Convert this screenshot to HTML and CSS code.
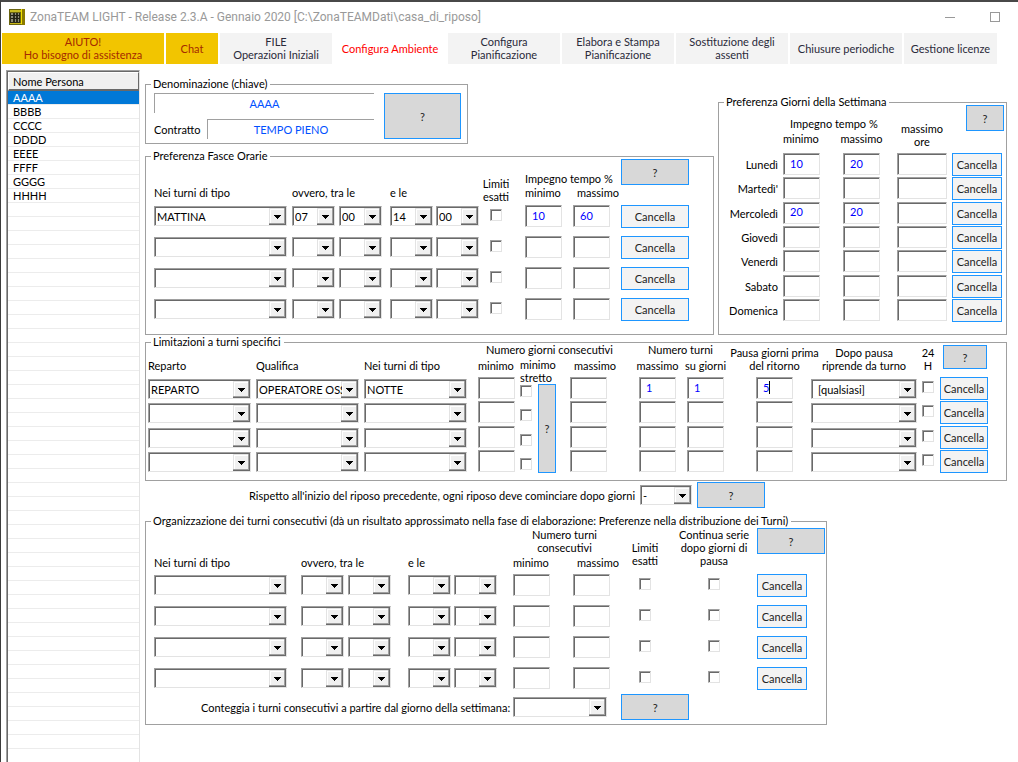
FILE: index.html
```
<!DOCTYPE html>
<html lang="it">
<head>
  <meta charset="UTF-8">
  <meta name="viewport" content="width=device-width, initial-scale=1.0">
  <title>ZonaTEAM LIGHT</title>
  <link rel="stylesheet" href="styles.css">
</head>
<body>

  <header class="titlebar">
    <svg class="app-icon" width="16" height="16" viewBox="0 0 16 16">
      <rect width="16" height="16" fill="#8a7a00"/>
      <rect x="0" y="0" width="12" height="16" fill="#6a6410"/>
      <rect x="1" y="1" width="11" height="2" fill="#c8bc20"/>
      <rect x="12" y="0" width="1" height="15" fill="#f0e000"/>
      <rect x="1" y="4" width="10" height="10" fill="#2c2c1c"/>
      <path d="M2 4h2v9h-2zM6 4h1v9h-1zM9 4h1v9h-1z" fill="#8c8c78"/>
      <path d="M2 6.5h9M2 9.5h9" stroke="#222214"/>
      <rect x="1" y="14" width="11" height="1" fill="#c8b818"/>
    </svg>
    <span class="title">ZonaTEAM LIGHT - Release 2.3.A - Gennaio 2020 [C:\ZonaTEAMDati\casa_di_riposo]</span>
    <button class="win-btn" aria-label="Riduci a icona">
      <svg width="10" height="10" viewBox="0 0 10 10"><path d="M0 5.5h10" stroke="#999"/></svg>
    </button>
    <button class="win-btn" aria-label="Ingrandisci">
      <svg width="10" height="10" viewBox="0 0 10 10"><rect x="0.5" y="0.5" width="9" height="9" fill="none" stroke="#999"/></svg>
    </button>
  </header>

  <nav class="menu">
    <button class="menu-btn help">AIUTO!<br>Ho bisogno di assistenza</button>
    <button class="menu-btn help">Chat</button>
    <button class="menu-btn">FILE<br>Operazioni Iniziali</button>
    <button class="menu-btn active">Configura Ambiente</button>
    <button class="menu-btn">Configura<br>Pianificazione</button>
    <button class="menu-btn">Elabora e Stampa<br>Pianificazione</button>
    <button class="menu-btn">Sostituzione degli<br>assenti</button>
    <button class="menu-btn">Chiusure periodiche</button>
    <button class="menu-btn">Gestione licenze</button>
  </nav>

  <main class="main">
    <div class="people">
      <table class="people-table">
        <thead><tr><th>Nome Persona</th></tr></thead>
        <tbody>
          <tr class="selected"><td>AAAA</td></tr>
          <tr><td>BBBB</td></tr>
          <tr><td>CCCC</td></tr>
          <tr><td>DDDD</td></tr>
          <tr><td>EEEE</td></tr>
          <tr><td>FFFF</td></tr>
          <tr><td>GGGG</td></tr>
          <tr><td>HHHH</td></tr>
        </tbody>
      </table>
    </div>

    <div class="workspace">
      <div class="top">
        <div class="top-left">
          <fieldset class="panel name-panel">
            <legend>Denominazione (chiave)</legend>
            <div class="body name-body">
              <div class="name-fields">
                <input class="plain" aria-label="Denominazione" value="AAAA">
                <div class="contract">
                  <label for="contratto">Contratto</label>
                  <input class="plain" id="contratto" value="TEMPO PIENO">
                </div>
              </div>
              <button class="btn info">?</button>
            </div>
          </fieldset>

          <fieldset class="panel">
            <legend>Preferenza Fasce Orarie</legend>
            <div class="body fasce fasce-heads">
              <span class="pair-head">Impegno tempo %</span>
              <button class="btn info head-btn">?</button>
              <span class="head c1">Nei turni di tipo</span>
              <span class="head c2">ovvero, tra le</span>
              <span class="head c4">e le</span>
              <span class="tall c6 over-check">Limiti<br>esatti</span>
              <span class="head c7">minimo</span>
              <span class="head c8 shift">massimo</span>
            </div>
            <div class="fasce fasce-rows">
              <select aria-label="Tipo turno 1"><option>MATTINA</option></select>
              <select aria-label="Dalle ore 1"><option>07</option></select>
              <select aria-label="Dalle minuti 1"><option>00</option></select>
              <select aria-label="Alle ore 1"><option>14</option></select>
              <select aria-label="Alle minuti 1"><option>00</option></select>
              <input type="checkbox" aria-label="Limiti esatti 1">
              <input class="num" aria-label="Minimo 1" value="10">
              <input class="num" aria-label="Massimo 1" value="60">
              <button class="btn">Cancella</button>

              <select aria-label="Tipo turno 2"><option></option></select>
              <select aria-label="Dalle ore 2"><option></option></select>
              <select aria-label="Dalle minuti 2"><option></option></select>
              <select aria-label="Alle ore 2"><option></option></select>
              <select aria-label="Alle minuti 2"><option></option></select>
              <input type="checkbox" aria-label="Limiti esatti 2">
              <input class="num" aria-label="Minimo 2">
              <input class="num" aria-label="Massimo 2">
              <button class="btn">Cancella</button>

              <select aria-label="Tipo turno 3"><option></option></select>
              <select aria-label="Dalle ore 3"><option></option></select>
              <select aria-label="Dalle minuti 3"><option></option></select>
              <select aria-label="Alle ore 3"><option></option></select>
              <select aria-label="Alle minuti 3"><option></option></select>
              <input type="checkbox" aria-label="Limiti esatti 3">
              <input class="num" aria-label="Minimo 3">
              <input class="num" aria-label="Massimo 3">
              <button class="btn">Cancella</button>

              <select aria-label="Tipo turno 4"><option></option></select>
              <select aria-label="Dalle ore 4"><option></option></select>
              <select aria-label="Dalle minuti 4"><option></option></select>
              <select aria-label="Alle ore 4"><option></option></select>
              <select aria-label="Alle minuti 4"><option></option></select>
              <input type="checkbox" aria-label="Limiti esatti 4">
              <input class="num" aria-label="Minimo 4">
              <input class="num" aria-label="Massimo 4">
              <button class="btn">Cancella</button>
            </div>
          </fieldset>
        </div>

        <fieldset class="panel">
          <legend>Preferenza Giorni della Settimana</legend>
          <div class="body giorni giorni-heads">
            <span class="pair-head">Impegno tempo %</span>
            <span class="tall c4 hours">massimo<br>ore</span>
            <button class="btn info head-btn">?</button>
            <span class="head c2">minimo</span>
            <span class="head c3 over-num">massimo</span>
          </div>
          <div class="giorni giorni-rows">
            <span class="day">Lunedì</span>
            <input class="num" aria-label="Lunedì minimo" value="10">
            <input class="num" aria-label="Lunedì massimo" value="20">
            <input class="num wide" aria-label="Lunedì massimo ore">
            <button class="btn">Cancella</button>

            <span class="day">Martedì'</span>
            <input class="num" aria-label="Martedì minimo">
            <input class="num" aria-label="Martedì massimo">
            <input class="num wide" aria-label="Martedì massimo ore">
            <button class="btn">Cancella</button>

            <span class="day">Mercoledì</span>
            <input class="num" aria-label="Mercoledì minimo" value="20">
            <input class="num" aria-label="Mercoledì massimo" value="20">
            <input class="num wide" aria-label="Mercoledì massimo ore">
            <button class="btn">Cancella</button>

            <span class="day">Giovedì</span>
            <input class="num" aria-label="Giovedì minimo">
            <input class="num" aria-label="Giovedì massimo">
            <input class="num wide" aria-label="Giovedì massimo ore">
            <button class="btn">Cancella</button>

            <span class="day">Venerdì</span>
            <input class="num" aria-label="Venerdì minimo">
            <input class="num" aria-label="Venerdì massimo">
            <input class="num wide" aria-label="Venerdì massimo ore">
            <button class="btn">Cancella</button>

            <span class="day">Sabato</span>
            <input class="num" aria-label="Sabato minimo">
            <input class="num" aria-label="Sabato massimo">
            <input class="num wide" aria-label="Sabato massimo ore">
            <button class="btn">Cancella</button>

            <span class="day">Domenica</span>
            <input class="num" aria-label="Domenica minimo">
            <input class="num" aria-label="Domenica massimo">
            <input class="num wide" aria-label="Domenica massimo ore">
            <button class="btn">Cancella</button>
          </div>
        </fieldset>
      </div>

      <fieldset class="panel">
        <legend>Limitazioni a turni specifici</legend>
        <div class="body limiti limiti-heads">
          <span class="group days-head">Numero giorni consecutivi</span>
          <span class="group turns-head">Numero turni</span>
          <span class="head c1">Reparto</span>
          <span class="head c2">Qualifica</span>
          <span class="head c3">Nei turni di tipo</span>
          <span class="head c4">minimo</span>
          <span class="head c5">minimo<br>stretto</span>
          <span class="head c7 shift">massimo</span>
          <span class="head c8 over-num">massimo</span>
          <span class="head c9 over-num">su giorni</span>
          <span class="tall c10 over-num">Pausa giorni prima<br>del ritorno</span>
          <span class="tall c11 over-select">Dopo pausa<br>riprende da turno</span>
          <span class="tall c12 over-check">24<br>H</span>
          <button class="btn info head-btn">?</button>
        </div>
        <div class="limiti limiti-rows">
          <button class="btn info tall-btn">?</button>

          <select aria-label="Reparto 1"><option>REPARTO</option></select>
          <select aria-label="Qualifica 1"><option>OPERATORE OSS</option></select>
          <select class="type" aria-label="Tipo turno specifico 1"><option>NOTTE</option></select>
          <input class="num" aria-label="Giorni minimo 1">
          <input type="checkbox" class="low" aria-label="Minimo stretto 1">
          <input class="num" aria-label="Giorni massimo 1">
          <input class="num" aria-label="Turni massimo 1" value="1">
          <input class="num" aria-label="Su giorni 1" value="1">
          <span class="caret"><input class="num" aria-label="Pausa giorni 1" value="5"></span>
          <select class="inset" aria-label="Riprende da turno 1"><option>[qualsiasi]</option></select>
          <input type="checkbox" aria-label="24 H 1">
          <button class="btn">Cancella</button>

          <select aria-label="Reparto 2"><option></option></select>
          <select aria-label="Qualifica 2"><option></option></select>
          <select class="type" aria-label="Tipo turno specifico 2"><option></option></select>
          <input class="num" aria-label="Giorni minimo 2">
          <input type="checkbox" class="low" aria-label="Minimo stretto 2">
          <input class="num" aria-label="Giorni massimo 2">
          <input class="num" aria-label="Turni massimo 2">
          <input class="num" aria-label="Su giorni 2">
          <input class="num" aria-label="Pausa giorni 2">
          <select aria-label="Riprende da turno 2"><option></option></select>
          <input type="checkbox" aria-label="24 H 2">
          <button class="btn">Cancella</button>

          <select aria-label="Reparto 3"><option></option></select>
          <select aria-label="Qualifica 3"><option></option></select>
          <select class="type" aria-label="Tipo turno specifico 3"><option></option></select>
          <input class="num" aria-label="Giorni minimo 3">
          <input type="checkbox" class="low" aria-label="Minimo stretto 3">
          <input class="num" aria-label="Giorni massimo 3">
          <input class="num" aria-label="Turni massimo 3">
          <input class="num" aria-label="Su giorni 3">
          <input class="num" aria-label="Pausa giorni 3">
          <select aria-label="Riprende da turno 3"><option></option></select>
          <input type="checkbox" aria-label="24 H 3">
          <button class="btn">Cancella</button>

          <select aria-label="Reparto 4"><option></option></select>
          <select aria-label="Qualifica 4"><option></option></select>
          <select class="type" aria-label="Tipo turno specifico 4"><option></option></select>
          <input class="num" aria-label="Giorni minimo 4">
          <input type="checkbox" class="low" aria-label="Minimo stretto 4">
          <input class="num" aria-label="Giorni massimo 4">
          <input class="num" aria-label="Turni massimo 4">
          <input class="num" aria-label="Su giorni 4">
          <input class="num" aria-label="Pausa giorni 4">
          <select aria-label="Riprende da turno 4"><option></option></select>
          <input type="checkbox" aria-label="24 H 4">
          <button class="btn">Cancella</button>
        </div>
      </fieldset>

      <div class="rest-row">
        <label for="riposo">Rispetto all'inizio del riposo precedente, ogni riposo deve cominciare dopo giorni</label>
        <select id="riposo" class="rest-select"><option>-</option></select>
        <button class="btn info">?</button>
      </div>

      <fieldset class="panel turni-panel">
        <legend>Organizzazione dei turni consecutivi (dà un risultato approssimato nella fase di elaborazione: Preferenze nella distribuzione dei Turni)</legend>
        <div class="body turni turni-heads">
          <span class="pair-head">Numero turni<br>consecutivi</span>
          <button class="btn info head-btn">?</button>
          <span class="head c1">Nei turni di tipo</span>
          <span class="head c2">ovvero, tra le</span>
          <span class="head c4">e le</span>
          <span class="head c6">minimo</span>
          <span class="head c7 shift">massimo</span>
          <span class="tall c8 over-check">Limiti<br>esatti</span>
          <span class="tall c9 over-check">Continua serie<br>dopo giorni di<br>pausa</span>
        </div>
        <div class="turni turni-rows">
          <select aria-label="Tipo turno consecutivo 1"><option></option></select>
          <select aria-label="Consecutivi dalle ore 1"><option></option></select>
          <select aria-label="Consecutivi dalle minuti 1"><option></option></select>
          <select aria-label="Consecutivi alle ore 1"><option></option></select>
          <select aria-label="Consecutivi alle minuti 1"><option></option></select>
          <input class="num" aria-label="Consecutivi minimo 1">
          <input class="num" aria-label="Consecutivi massimo 1">
          <input type="checkbox" aria-label="Consecutivi limiti esatti 1">
          <input type="checkbox" aria-label="Continua serie 1">
          <button class="btn">Cancella</button>

          <select aria-label="Tipo turno consecutivo 2"><option></option></select>
          <select aria-label="Consecutivi dalle ore 2"><option></option></select>
          <select aria-label="Consecutivi dalle minuti 2"><option></option></select>
          <select aria-label="Consecutivi alle ore 2"><option></option></select>
          <select aria-label="Consecutivi alle minuti 2"><option></option></select>
          <input class="num" aria-label="Consecutivi minimo 2">
          <input class="num" aria-label="Consecutivi massimo 2">
          <input type="checkbox" aria-label="Consecutivi limiti esatti 2">
          <input type="checkbox" aria-label="Continua serie 2">
          <button class="btn">Cancella</button>

          <select aria-label="Tipo turno consecutivo 3"><option></option></select>
          <select aria-label="Consecutivi dalle ore 3"><option></option></select>
          <select aria-label="Consecutivi dalle minuti 3"><option></option></select>
          <select aria-label="Consecutivi alle ore 3"><option></option></select>
          <select aria-label="Consecutivi alle minuti 3"><option></option></select>
          <input class="num" aria-label="Consecutivi minimo 3">
          <input class="num" aria-label="Consecutivi massimo 3">
          <input type="checkbox" aria-label="Consecutivi limiti esatti 3">
          <input type="checkbox" aria-label="Continua serie 3">
          <button class="btn">Cancella</button>

          <select aria-label="Tipo turno consecutivo 4"><option></option></select>
          <select aria-label="Consecutivi dalle ore 4"><option></option></select>
          <select aria-label="Consecutivi dalle minuti 4"><option></option></select>
          <select aria-label="Consecutivi alle ore 4"><option></option></select>
          <select aria-label="Consecutivi alle minuti 4"><option></option></select>
          <input class="num" aria-label="Consecutivi minimo 4">
          <input class="num" aria-label="Consecutivi massimo 4">
          <input type="checkbox" aria-label="Consecutivi limiti esatti 4">
          <input type="checkbox" aria-label="Continua serie 4">
          <button class="btn">Cancella</button>
        </div>
        <div class="count-row">
          <label for="giorno">Conteggia i turni consecutivi a partire dal giorno della settimana:</label>
          <select id="giorno" class="count-select"><option></option></select>
          <button class="btn info">?</button>
        </div>
      </fieldset>
    </div>
  </main>

</body>
</html>
```
FILE: styles.css
```
* {
  box-sizing: border-box;
}

body {
  margin: 0;
  min-height: 100vh;
  display: flex;
  flex-direction: column;
  border-top: 2px solid #484848;
  border-left: 1px solid #3c3c3c;
  background: #fff;
  color: #000;
  font: 11px/13px Lato, "Open Sans", sans-serif;
}

button, input, select {
  font: inherit;
  margin: 0;
}

/* title bar */
.titlebar {
  display: flex;
  align-items: center;
  height: 31px;
  padding: 0 18px 2px 8px;
}

.app-icon {
  margin-right: 5px;
}

.title {
  flex: 1;
  color: #999;
  font: 12px/16px Roboto, sans-serif;
}

.win-btn {
  display: flex;
  padding: 0;
  margin-left: 35px;
  border: 0;
  background: none;
}

/* menu */
.menu {
  display: grid;
  grid-template-columns: 162fr 52fr repeat(6, 112fr) 93fr;
  gap: 2px;
  height: 31px;
  padding: 0 21px 0 1px;
}

.menu-btn {
  padding: 0 0 1px;
  border: 0;
  background: #f3f3f3;
  color: #2a2a3a;
  white-space: nowrap;
}

.menu-btn.help {
  background: #f2c500;
  color: #a52a00;
}

.menu-btn.active {
  background: #fff;
  color: #f00;
}

/* people list */
.main {
  flex: 1;
  display: grid;
  grid-template-columns: 134px 1fr;
  column-gap: 5px;
  padding: 6px 11px 0 5px;
}

.people {
  border: 1px solid #a0a0a0;
  border-right-color: #e3e3e3;
  border-bottom: 0;
  box-shadow: inset 1px 1px 0 #696969;
  padding: 1px 0 0 1px;
  background: repeating-linear-gradient(#fff 0 13px, #ececec 13px 14px) 1px 20px no-repeat;
}

.people-table {
  width: 100%;
  border-collapse: separate;
  border-spacing: 0;
}

.people-table th {
  height: 19px;
  padding: 0 4px;
  border: 1px solid #fff;
  border-right-color: #696969;
  border-bottom: 2px solid #696969;
  background: #f0f0f0;
  font-weight: normal;
  text-align: left;
}

.people-table td {
  height: 14px;
  padding: 0 5px;
  border-bottom: 1px solid #ececec;
}

.people-table .selected td {
  background: #0078d7;
  color: #fff;
}

/* panels */
.workspace {
  display: flex;
  flex-direction: column;
  min-width: 0;
}

.top {
  display: grid;
  grid-template-columns: 1fr 289px;
  align-items: end;
  column-gap: 4px;
}

.top-left {
  display: flex;
  flex-direction: column;
  padding-top: 7px;
  gap: 5px;
}

.panel {
  min-width: 0;
  margin: 0;
  padding: 0;
  border: 1px solid #a0a0a0;
}

.panel legend {
  height: 14px;
  margin-left: 5px;
  padding: 0 3px 0 2px;
  line-height: 14px;
  white-space: nowrap;
}

/* pull the content up next to the top border */
.body {
  margin-top: -6px;
}

.name-panel {
  align-self: flex-start;
  width: 323px;
}

.name-body {
  display: grid;
  grid-template-columns: 1fr 77px;
  gap: 10px;
  padding: 8px 6px 4px 8px;
}

.name-fields {
  display: flex;
  flex-direction: column;
  gap: 6px;
}

.contract {
  display: flex;
  align-items: center;
  gap: 6px;
}

.contract label {
  width: 47px;
}

.plain {
  flex: 1;
  min-width: 0;
  height: 20px;
  padding: 0;
  border: solid #a0a0a0;
  border-width: 1px 0 0 1px;
  background: #fff;
  color: #0050ff;
  text-align: center;
}

.name-fields > .plain {
  flex: none;
}

/* controls */
.btn {
  width: 100%;
  height: 23px;
  padding: 0;
  border: 1px solid #1e96ff;
  background: #f3f3f3;
  color: #222;
}

.info {
  height: 26px;
  background: #d8d8d8;
}

.name-body .info {
  height: 46px;
}

select {
  appearance: none;
  height: 20px;
  padding: 0 16px 0 2px;
  border: 1px solid #e3e3e3;
  border-top-color: #a0a0a0;
  border-left-color: #a0a0a0;
  border-radius: 0;
  box-shadow: inset 1px 1px 0 #696969;
  color: #000;
  background: #fff url("data:image/svg+xml,%3Csvg xmlns='http://www.w3.org/2000/svg' width='17' height='17' shape-rendering='crispEdges'%3E%3Crect width='17' height='17' fill='%23696969'/%3E%3Crect width='16' height='16' fill='%23a0a0a0'/%3E%3Crect width='15' height='15' fill='%23e3e3e3'/%3E%3Crect x='1' y='1' width='14' height='14' fill='%23fff'/%3E%3Crect x='2' y='2' width='13' height='13' fill='%23f0f0f0'/%3E%3Cpath d='M5 7h7v1h-1v1h-1v1h-1v1h-1v-1h-1v-1h-1v-1h-1z'/%3E%3C/svg%3E") no-repeat right 0 top 1px;
}

.num {
  width: 37px;
  height: 22px;
  padding: 0 2px 2px 6px;
  border: 1px solid #e3e3e3;
  border-top-color: #a0a0a0;
  border-left-color: #a0a0a0;
  box-shadow: inset 1px 1px 0 #696969;
  background: #fff;
  color: #00f;
}

.num.wide {
  width: 50px;
}

input[type="checkbox"] {
  appearance: none;
  width: 12px;
  height: 12px;
  margin-top: 4px;
  border: 1px solid #e3e3e3;
  border-top-color: #a0a0a0;
  border-left-color: #a0a0a0;
  box-shadow: inset 1px 1px 0 #696969;
  background: #fff;
}

input[type="checkbox"].low {
  margin-top: 8px;
}

.inset {
  padding-left: 6px;
}

/* column headings */
.head, .tall, .pair-head, .group {
  white-space: nowrap;
}

.head {
  grid-row: 2;
}

.tall {
  grid-row: 1 / 3;
  align-self: end;
  text-align: center;
}

.pair-head {
  grid-row: 1;
  align-self: end;
}

.head-btn {
  grid-row: 1;
  margin-top: 2px;
}

.over-check, .over-num, .over-select, .hours {
  display: flex;
  justify-content: center;
}

.over-check {
  width: 12px;
}

.over-num {
  width: 37px;
}

.over-select {
  width: 106px;
}

.hours {
  width: 50px;
}

.shift {
  padding-left: 4px;
}

.c1 { grid-column: 1; }
.c2 { grid-column: 2; }
.c3 { grid-column: 3; }
.c4 { grid-column: 4; }
.c5 { grid-column: 5; }
.c6 { grid-column: 6; }
.c7 { grid-column: 7; }
.c8 { grid-column: 8; }
.c9 { grid-column: 9; }
.c10 { grid-column: 10; }
.c11 { grid-column: 11; }
.c12 { grid-column: 12; }

/* Preferenza Fasce Orarie */
.fasce {
  display: grid;
  grid-template-columns: minmax(138px, 1fr) 47px 51px 46px 54px 35px 48px 48px 68px;
  align-items: start;
  padding: 0 24px 0 8px;
}

.fasce-heads {
  grid-template-rows: 29px 19px;
}

.fasce-rows {
  grid-auto-rows: 31px;
  padding-bottom: 5px;
}

.fasce .pair-head {
  grid-column: 7 / 9;
  padding-bottom: 1px;
}

.fasce .head-btn {
  grid-column: 9;
}

.fasce .tall {
  padding-bottom: 2px;
}

.fasce select, .turni select {
  width: 43px;
  margin-top: 1px;
}

.fasce select:nth-of-type(5n + 1) {
  width: calc(100% - 5px);
}

/* Preferenza Giorni della Settimana */
.giorni {
  display: grid;
  grid-template-columns: 64px 60px 54px 55px 50px;
  align-items: start;
}

.giorni-heads {
  grid-template-rows: 29px 21px;
}

.giorni-rows {
  grid-auto-rows: 23px;
  align-content: space-between;
  height: 169px;
  margin-bottom: 12px;
}

.giorni .pair-head {
  grid-column: 2 / 4;
  padding: 0 0 2px 7px;
}

.giorni .hours {
  padding-bottom: 5px;
}

.giorni .head-btn {
  grid-column: 5;
  width: 38px;
  margin-left: 14px;
}

.day {
  padding-right: 5px;
  line-height: 23px;
  text-align: right;
}

/* Limitazioni a turni specifici */
.limiti {
  display: grid;
  grid-template-columns: minmax(108px, 1fr) minmax(108px, 1fr) 114px 42px 18px 32px 69px 48px 69px 55px 111px 18px 48px;
  align-items: start;
  padding: 0 18px 0 2px;
}

.limiti-heads {
  grid-template-rows: 15px 19px;
}

.limiti-rows {
  grid-auto-rows: 23px;
  align-content: space-between;
  height: 96px;
  margin-bottom: 7px;
}

.limiti select {
  width: calc(100% - 5px);
  margin-top: 2px;
}

.limiti .type {
  width: 103px;
}

.limiti .days-head {
  grid-row: 1;
  grid-column: 4 / 8;
  padding-left: 8px;
}

.limiti .turns-head {
  grid-row: 1;
  grid-column: 8 / 10;
  padding-left: 9px;
}

.limiti .head {
  padding-top: 1px;
}

.limiti .head.c5 {
  padding-top: 0;
}

.limiti .tall {
  padding-bottom: 5px;
}

.limiti .head-btn {
  grid-column: 13;
  width: 44px;
  height: 24px;
  margin-left: 3px;
}

.tall-btn {
  grid-row: 1 / 5;
  grid-column: 6;
  width: 18px;
  height: auto;
  align-self: stretch;
  margin-top: 7px;
}

.caret {
  position: relative;
  height: 22px;
}

.caret::after {
  content: "";
  position: absolute;
  left: 13px;
  top: 4px;
  width: 1px;
  height: 13px;
  background: #000;
}

/* Rispetto all'inizio del riposo */
.rest-row {
  display: flex;
  align-items: center;
  padding: 1px 0 6px 104px;
}

.rest-row label {
  margin-right: 5px;
}

.rest-row .btn, .count-row .btn {
  width: 68px;
}

.rest-select {
  width: 52px;
  margin-right: 5px;
}

/* Organizzazione dei turni consecutivi */
.turni-panel {
  align-self: flex-start;
}

.turni {
  display: grid;
  grid-template-columns: 147px 47px 60px 46px 59px 60px 66px 69px 49px 68px;
  align-items: start;
  padding: 0 1px 0 8px;
}

.turni-heads {
  grid-template-rows: 34px 18px;
}

.turni-rows {
  grid-auto-rows: 31px;
}

.turni .pair-head {
  grid-column: 6 / 8;
  width: 103px;
  padding-bottom: 2px;
  text-align: center;
}

.turni .tall {
  padding-bottom: 7px;
}

.turni .head-btn {
  grid-column: 10;
  margin-top: 6px;
}

.turni select:nth-of-type(5n + 1) {
  width: 133px;
}

.turni .btn:not(.info) {
  width: 50px;
}

.count-row {
  display: flex;
  align-items: center;
  margin-top: -4px;
  padding: 0 0 4px 55px;
}

.count-row label {
  margin-right: 3px;
}

.count-select {
  width: 94px;
  margin-right: 14px;
}
```
